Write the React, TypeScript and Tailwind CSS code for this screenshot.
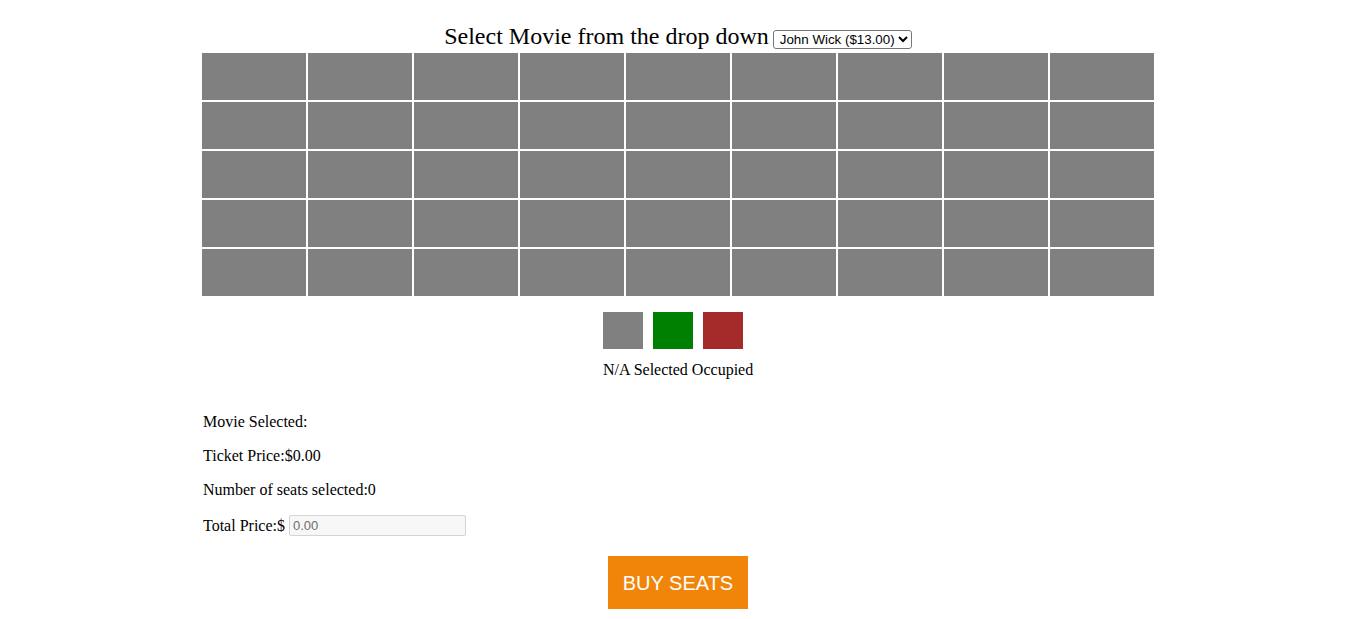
const seats = Array.from({ length: 45 }, (_, i) => i);

export default function App() {
  return (
    <div className="w-[1356px] bg-white text-black font-['Liberation_Serif',serif]">
      <div className="pt-[23px] flex justify-center items-baseline text-[24px] leading-[27px]">
        <span>Select Movie from the drop down</span>
        <select
          defaultValue="13"
          className="ml-[4px] w-[139px] h-[19px] border border-[#767676] rounded-[3px] bg-white pl-[2px] text-[13.33px] leading-[15px] font-['Liberation_Sans',Arial,sans-serif]"
        >
          <option value="13">John Wick ($13.00)</option>
          <option value="10">Avengers ($10.00)</option>
          <option value="8">Toy Story ($8.00)</option>
        </select>
      </div>

      <div className="mt-[3px] mx-auto w-[952px] grid grid-cols-9 gap-x-[2px] gap-y-[2px]">
        {seats.map((s) => (
          <div key={s} className="h-[47px] bg-[#808080]" />
        ))}
      </div>

      <div className="mt-[16px] mx-auto w-[150px]">
        <div className="flex gap-[10px]">
          <div className="w-[40px] h-[37px] bg-[#808080]" />
          <div className="w-[40px] h-[37px] bg-[#008000]" />
          <div className="w-[40px] h-[37px] bg-[#a52a2a]" />
        </div>
        <p className="mt-[12px] text-[16px] leading-[18px] whitespace-nowrap">N/A Selected Occupied</p>
      </div>

      <div className="mt-[34px] ml-[203px] text-[16px] leading-[18px]">
        <p>Movie Selected:</p>
        <p className="mt-[16px]">Ticket Price:$0.00</p>
        <p className="mt-[16px]">Number of seats selected:0</p>
        <p className="mt-[16px] flex items-center">
          <span>Total Price:$</span>
          <input
            readOnly
            value="0.00"
            className="ml-[4px] w-[177px] h-[21px] border border-[#d4d4d4] rounded-[2px] bg-[#f7f7f7] px-[3px] text-[13px] text-[#6d6d6d] font-['Liberation_Sans',Arial,sans-serif]"
          />
        </p>
      </div>

      <div className="mt-[20px] flex justify-center">
        <button className="w-[140px] h-[53px] bg-[#f0850a] text-white text-[20px] font-['Liberation_Sans',Arial,sans-serif]">
          BUY SEATS
        </button>
      </div>
    </div>
  );
}
